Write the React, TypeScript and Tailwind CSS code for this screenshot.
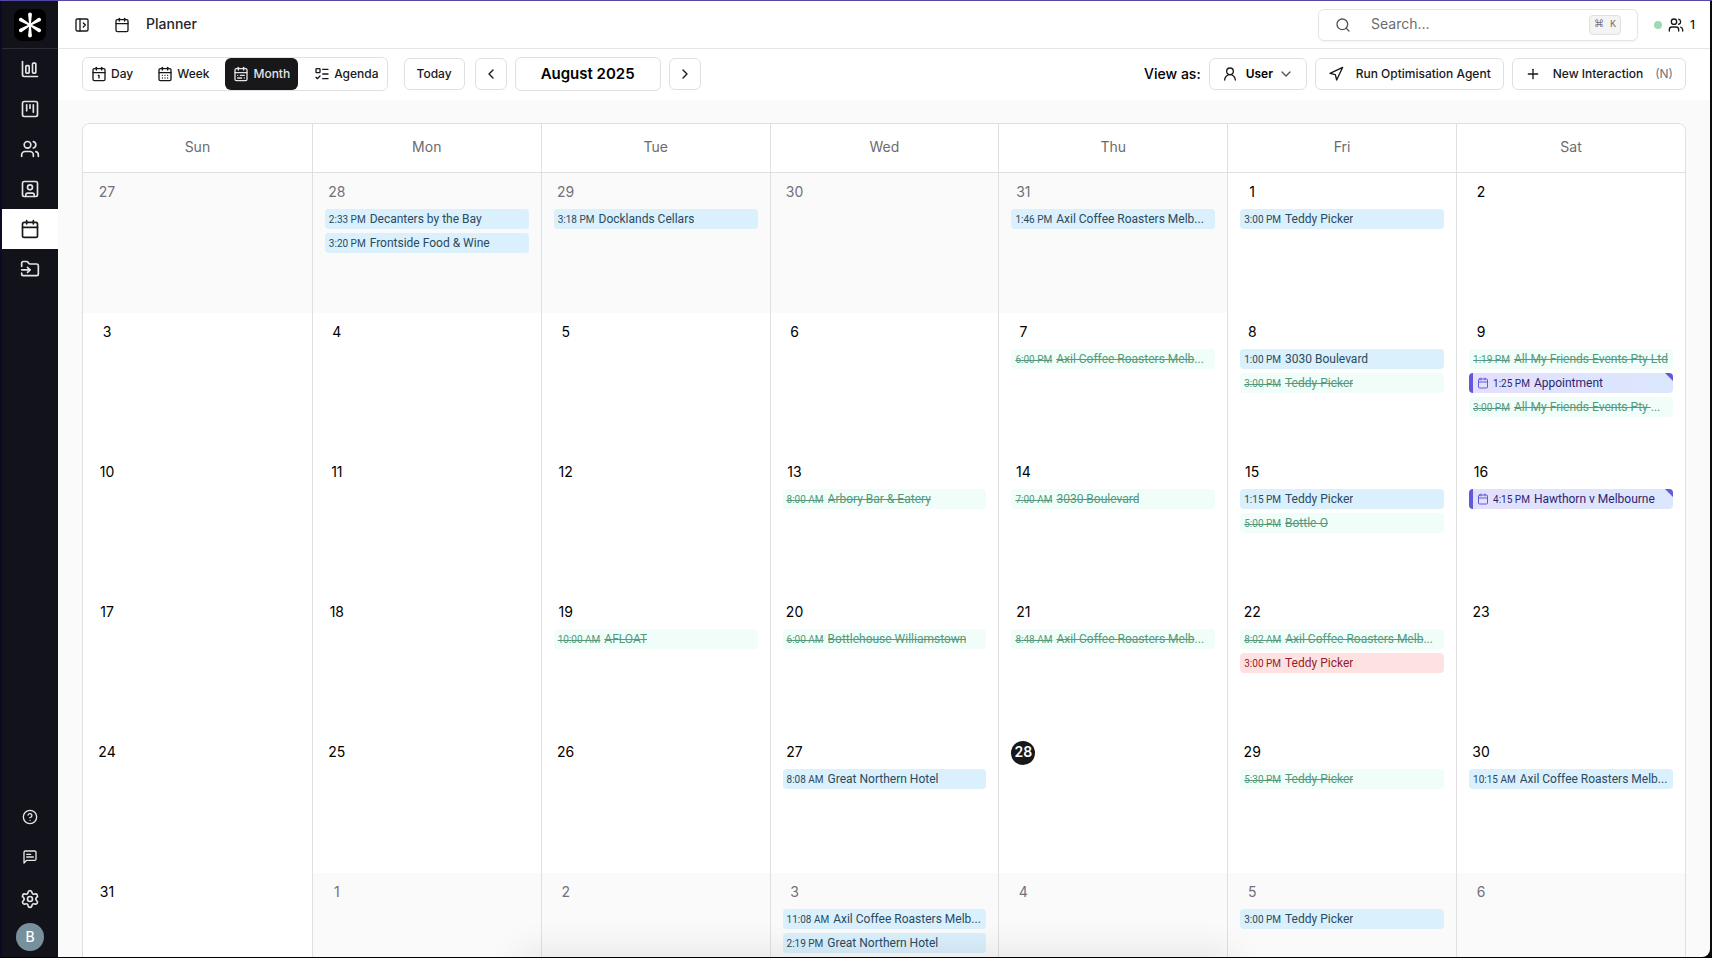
import React from "react";
import {
  Calendar,
  Calendar1,
  CalendarDays,
  CalendarRange,
  ChartColumnBig,
  ChevronDown,
  ChevronLeft,
  ChevronRight,
  CircleHelp,
  FolderInput,
  ListTodo,
  Navigation,
  PanelLeftOpen,
  Plus,
  Search,
  Settings,
  SquareKanban,
  SquareUser,
  UserRound,
  Users,
} from "lucide-react";
import clsx from "clsx";

type EventKind = "planned" | "done" | "missed" | "appointment";

interface PlannerEvent {
  time: string;
  title: string;
  kind: EventKind;
}

interface Day {
  date: number;
  outside?: boolean;
  today?: boolean;
  events?: PlannerEvent[];
}

const planned = (time: string, title: string): PlannerEvent => ({ time, title, kind: "planned" });
const done = (time: string, title: string): PlannerEvent => ({ time, title, kind: "done" });
const missed = (time: string, title: string): PlannerEvent => ({ time, title, kind: "missed" });
const appointment = (time: string, title: string): PlannerEvent => ({ time, title, kind: "appointment" });

const AXIL = "Axil Coffee Roasters Melb...";

const WEEKDAYS = ["Sun", "Mon", "Tue", "Wed", "Thu", "Fri", "Sat"];

const WEEKS: Day[][] = [
  [
    { date: 27, outside: true },
    {
      date: 28,
      outside: true,
      events: [planned("2:33 PM", "Decanters by the Bay"), planned("3:20 PM", "Frontside Food & Wine")],
    },
    { date: 29, outside: true, events: [planned("3:18 PM", "Docklands Cellars")] },
    { date: 30, outside: true },
    { date: 31, outside: true, events: [planned("1:46 PM", AXIL)] },
    { date: 1, events: [planned("3:00 PM", "Teddy Picker")] },
    { date: 2 },
  ],
  [
    { date: 3 },
    { date: 4 },
    { date: 5 },
    { date: 6 },
    { date: 7, events: [done("6:00 PM", AXIL)] },
    { date: 8, events: [planned("1:00 PM", "3030 Boulevard"), done("3:00 PM", "Teddy Picker")] },
    {
      date: 9,
      events: [
        done("1:19 PM", "All My Friends Events Pty Ltd"),
        appointment("1:25 PM", "Appointment"),
        done("3:00 PM", "All My Friends Events Pty ..."),
      ],
    },
  ],
  [
    { date: 10 },
    { date: 11 },
    { date: 12 },
    { date: 13, events: [done("8:00 AM", "Arbory Bar & Eatery")] },
    { date: 14, events: [done("7:00 AM", "3030 Boulevard")] },
    { date: 15, events: [planned("1:15 PM", "Teddy Picker"), done("5:00 PM", "Bottle-O")] },
    { date: 16, events: [appointment("4:15 PM", "Hawthorn v Melbourne")] },
  ],
  [
    { date: 17 },
    { date: 18 },
    { date: 19, events: [done("10:00 AM", "AFLOAT")] },
    { date: 20, events: [done("6:00 AM", "Bottlehouse Williamstown")] },
    { date: 21, events: [done("8:48 AM", AXIL)] },
    { date: 22, events: [done("8:02 AM", AXIL), missed("3:00 PM", "Teddy Picker")] },
    { date: 23 },
  ],
  [
    { date: 24 },
    { date: 25 },
    { date: 26 },
    { date: 27, events: [planned("8:08 AM", "Great Northern Hotel")] },
    { date: 28, today: true },
    { date: 29, events: [done("5:30 PM", "Teddy Picker")] },
    { date: 30, events: [planned("10:15 AM", AXIL)] },
  ],
  [
    { date: 31 },
    { date: 1, outside: true },
    { date: 2, outside: true },
    { date: 3, outside: true, events: [planned("11:08 AM", AXIL), planned("2:19 PM", "Great Northern Hotel")] },
    { date: 4, outside: true },
    { date: 5, outside: true, events: [planned("3:00 PM", "Teddy Picker")] },
    { date: 6, outside: true },
  ],
];

const NAV = [
  { label: "Dashboard", icon: ChartColumnBig },
  { label: "Boards", icon: SquareKanban },
  { label: "Customers", icon: Users },
  { label: "Contacts", icon: SquareUser },
  { label: "Planner", icon: Calendar, active: true },
  { label: "Imports", icon: FolderInput },
];

const VIEWS = [
  { label: "Day", icon: Calendar1 },
  { label: "Week", icon: CalendarDays },
  { label: "Month", icon: CalendarRange, active: true },
  { label: "Agenda", icon: ListTodo },
];

const EVENT_STYLES: Record<EventKind, string> = {
  planned: "bg-[#daf0fc] text-[#2b4a5e] px-1",
  done: "bg-[#f1fdf8] text-[#559a7c] px-1 line-through",
  missed: "bg-[#fee2e2] text-[#951c2b] px-1",
  appointment: "bg-linear-to-r from-[#e3e0fd] to-[#dbe7fd] text-[#2b2670] border-l-4 border-[#6259d8] pl-1 pr-2",
};

function Logo() {
  return (
    <svg viewBox="0 0 32 32" className="w-8 h-8 rounded-lg bg-black" aria-hidden="true">
      {[0, 60, 120, 180, 240, 300].map((angle) => (
        <path
          key={angle}
          d="M15.2 16 L14.1 5.4 a1.9 1.9 0 0 1 3.8 0 L16.8 16 z"
          fill="#fff"
          transform={`rotate(${angle} 16 16)`}
        />
      ))}
    </svg>
  );
}

function FeedbackIcon() {
  return (
    <svg
      viewBox="0 0 24 24"
      className="w-4 h-4"
      fill="none"
      stroke="currentColor"
      strokeWidth="2"
      strokeLinecap="round"
      strokeLinejoin="round"
      aria-hidden="true"
    >
      <path d="M21 15a2 2 0 0 1-2 2H7l-4 4V5a2 2 0 0 1 2-2h14a2 2 0 0 1 2 2z" />
      <path d="M13 8H7" />
      <path d="M17 12H7" />
    </svg>
  );
}

function Sidebar() {
  return (
    <aside className="w-[58px] shrink-0 flex flex-col bg-[#11121a] border-l-2 border-[#0b0a24] text-[#e4e4e7]">
      <a href="#home" aria-label="Home" className="h-12 flex items-center justify-center border-b border-[#2c2d34]">
        <Logo />
      </a>
      <nav className="flex flex-col">
        {NAV.map(({ label, icon: Icon, active }) => (
          <a
            key={label}
            href={`#${label.toLowerCase()}`}
            aria-label={label}
            className={clsx("h-10 flex items-center justify-center", active && "bg-white text-[#18181b]")}
          >
            <Icon className="w-5 h-5" strokeWidth={2} />
          </a>
        ))}
      </nav>
      <div className="mt-auto pb-1.5 flex flex-col items-center">
        <button aria-label="Help" className="w-full h-10 flex items-center justify-center">
          <CircleHelp className="w-4 h-4" />
        </button>
        <button aria-label="Feedback" className="w-full h-10 flex items-center justify-center">
          <FeedbackIcon />
        </button>
        <button aria-label="Settings" className="w-full h-11 flex items-center justify-center">
          <Settings className="w-5 h-5" strokeWidth={2} />
        </button>
        <button
          aria-label="Account"
          className="mt-0.5 w-7 h-7 rounded-full bg-[#78909c] text-white text-sm font-medium flex items-center justify-center"
        >
          B
        </button>
      </div>
    </aside>
  );
}

function Header() {
  return (
    <header className="h-12 shrink-0 flex items-center bg-white border-b border-[#e5e5e5] pl-4 pr-[15px]">
      <button aria-label="Expand sidebar" className="w-4 h-4">
        <PanelLeftOpen className="w-4 h-4" />
      </button>
      <Calendar className="ml-6 w-4 h-4" />
      <h1 className="ml-4 pb-0.5 text-sm font-medium text-[#27272a]">Planner</h1>
      <label className="ml-auto w-80 h-8 flex items-center rounded-md border border-[#e5e5e5] bg-white pl-4 pr-4 shadow-xs">
        <Search className="w-4 h-4 shrink-0 text-[#52525b]" />
        <input
          type="text"
          aria-label="Search"
          placeholder="Search..."
          className="ml-5 pb-0.5 flex-1 min-w-0 text-sm outline-none placeholder:text-[#6b6b70]"
        />
        <kbd className="h-5 px-1 flex items-center rounded border border-[#e0e0e0] bg-[#f4f4f5] text-[10px] text-[#71717a] font-['Liberation_Mono','DejaVu_Sans',monospace]">
          ⌘ K
        </kbd>
      </label>
      <span className="ml-4 w-2 h-2 rounded-full bg-[#9bdcb4]" />
      <Users className="ml-1.5 w-4 h-4" />
      <span className="ml-1.5 text-xs font-medium">1</span>
    </header>
  );
}

const outlined = "h-8 rounded-md border border-[#e0e0e0] bg-white flex items-center justify-center";

function Toolbar() {
  return (
    <div className="h-[51px] shrink-0 flex items-center bg-white pl-6 pr-6 pb-0.5 text-xs font-medium text-[#18181b]">
      <div className="flex items-center rounded-md border border-[#e0e0e0]">
        {VIEWS.map(({ label, icon: Icon, active }) => (
          <button
            key={label}
            aria-pressed={!!active}
            className={clsx(
              "h-8 pl-2 pr-2 flex items-center gap-1",
              active ? "mx-2 rounded-md bg-[#18181b] text-[#e4e4e7]" : "rounded-md",
              label === "Week" && "ml-2",
            )}
          >
            <Icon className="w-4 h-4" />
            {label}
          </button>
        ))}
      </div>
      <button className={clsx(outlined, "ml-4 px-3")}>Today</button>
      <button aria-label="Previous month" className={clsx(outlined, "ml-2.5 w-8")}>
        <ChevronLeft className="w-4 h-4" />
      </button>
      <button className="ml-2 w-[146px] h-[34px] rounded-md border border-[#e0e0e0] text-[15px] font-semibold text-black">
        August 2025
      </button>
      <button aria-label="Next month" className={clsx(outlined, "ml-2 w-8")}>
        <ChevronRight className="w-4 h-4" />
      </button>

      <label htmlFor="view-as" className="ml-auto text-sm font-medium text-black">
        View as:
      </label>
      <div className={clsx(outlined, "ml-2 px-3 relative")}>
        <UserRound className="w-4 h-4" />
        <select
          id="view-as"
          defaultValue="User"
          className="ml-2 pr-5 appearance-none bg-transparent font-semibold text-black outline-none"
        >
          <option>User</option>
        </select>
        <ChevronDown className="absolute right-3 w-4 h-4 text-[#52525b] pointer-events-none" />
      </div>
      <button className={clsx(outlined, "ml-2 px-3")}>
        <Navigation className="w-4 h-4" />
        <span className="ml-3">Run Optimisation Agent</span>
      </button>
      <button className={clsx(outlined, "ml-2 px-3")}>
        <Plus className="w-4 h-4" />
        <span className="ml-3">New Interaction</span>
        <span className="ml-3 font-normal text-[#71717a]">(N)</span>
      </button>
    </div>
  );
}

// The trailing dots are an inline-block so that a strike-through stops before them
function EventTitle({ title }: { title: string }) {
  const shortened = title.endsWith("...");
  return (
    <span className="min-w-0 truncate text-xs">
      {shortened ? title.slice(0, -3) : title}
      {shortened && <span className="inline-block">...</span>}
    </span>
  );
}

function EventChip({ event }: { event: PlannerEvent }) {
  const isAppointment = event.kind === "appointment";
  return (
    <button
      className={clsx(
        "relative w-full h-5 flex items-center gap-1 rounded overflow-hidden text-left font-[Roboto,'Liberation_Sans',sans-serif]",
        EVENT_STYLES[event.kind],
      )}
    >
      {isAppointment && <Calendar className="w-3 h-3 shrink-0 text-[#6259d8]" />}
      <span className="shrink-0 text-[10px] whitespace-nowrap">{event.time}</span>
      <EventTitle title={event.title} />
      {isAppointment && (
        <svg viewBox="0 0 8 8" className="absolute top-0 right-0 w-2 h-2" aria-hidden="true">
          <path d="M0 0h8v8z" fill="#6259d8" />
        </svg>
      )}
    </button>
  );
}

function DayCell({ day }: { day: Day }) {
  return (
    <td
      className={clsx(
        "h-[140px] align-top px-3 pt-2 border-l border-[#e0e0e0] first:border-l-0",
        day.outside ? "bg-[#fafafa]" : "bg-white",
      )}
    >
      <div
        className={clsx(
          "w-6 h-6 pb-0.5 rounded-full flex items-center justify-center text-sm",
          day.today && "bg-[#18181b] text-white font-semibold",
          day.outside ? "text-[#71717a]" : !day.today && "text-black",
        )}
      >
        {day.date}
      </div>
      <div className="mt-1 flex flex-col gap-1">
        {day.events?.map((event) => (
          <EventChip key={event.time} event={event} />
        ))}
      </div>
    </td>
  );
}

function MonthGrid() {
  return (
    <div className="rounded-lg border border-[#e0e0e0] overflow-hidden">
      <table className="w-full table-fixed border-separate border-spacing-0">
        <thead>
          <tr>
            {WEEKDAYS.map((name) => (
              <th
                key={name}
                scope="col"
                className="h-[49px] pb-0.5 bg-white border-b border-l border-[#e0e0e0] first:border-l-0 text-sm font-normal text-[#6b6b70]"
              >
                {name}
              </th>
            ))}
          </tr>
        </thead>
        <tbody>
          {WEEKS.map((week, i) => (
            <tr key={i}>
              {week.map((day) => (
                <DayCell key={day.date} day={day} />
              ))}
            </tr>
          ))}
        </tbody>
      </table>
    </div>
  );
}

export default function App() {
  return (
    <div className="h-screen flex bg-[#0a0a0f] border-t border-t-[#5149a5] border-b border-b-black pr-0.5 font-[Inter,'Liberation_Sans',sans-serif] text-[#18181b]">
      <Sidebar />
      <div className="relative flex-1 min-w-0 flex flex-col bg-[#fafafa] rounded-br-lg overflow-hidden">
        <Header />
        <Toolbar />
        <main className="flex-1 min-h-0 overflow-hidden px-6 pt-[23px]">
          <MonthGrid />
        </main>
        <div className="absolute -bottom-4 left-[28%] right-[29%] h-4 shadow-[0_0_36px_rgba(0,0,0,0.16)] pointer-events-none" />
      </div>
    </div>
  );
}
